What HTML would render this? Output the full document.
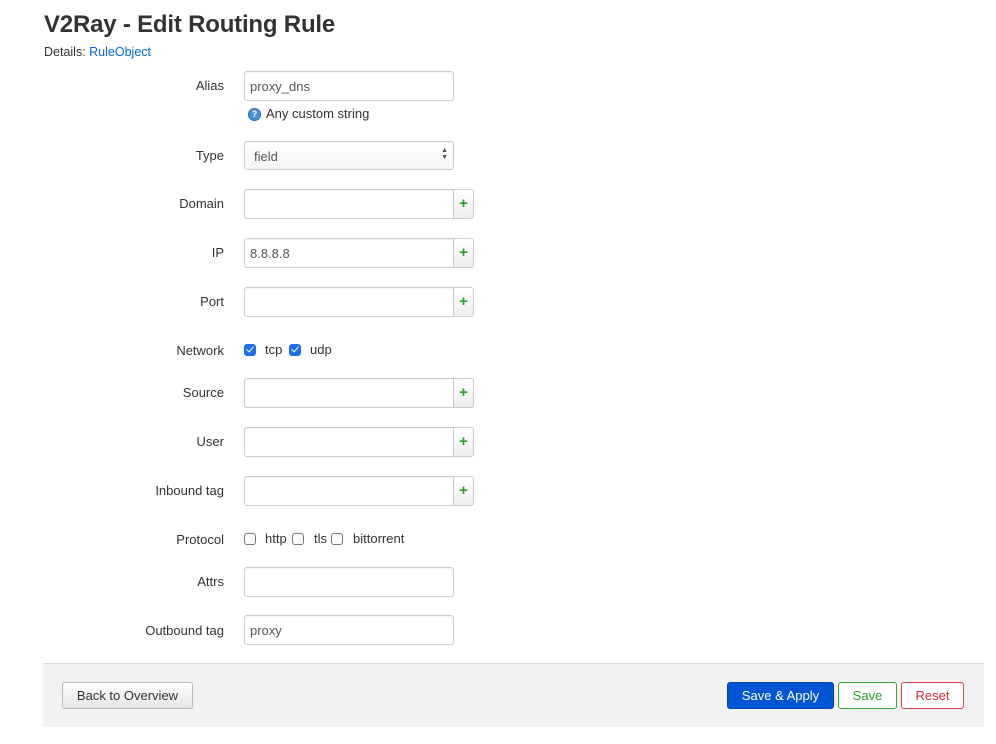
<!DOCTYPE html>
<html><head><meta charset="utf-8"><style>
*{box-sizing:border-box}
body{margin:0;width:996px;height:744px;background:#fff;font-family:"Liberation Sans",Arial,sans-serif;color:#333;position:relative;overflow:hidden}
.a{position:absolute}
h1{position:absolute;left:44px;top:11px;margin:0;font-size:24px;font-weight:bold;color:#333;letter-spacing:-0.2px}
.det{left:44px;top:45px;font-size:12.5px}
.det span{color:#0069d6}
.lbl{position:absolute;right:772px;font-size:13px;color:#333;white-space:nowrap}
.in{position:absolute;left:244px;width:210px;height:30px;border:1px solid #ccc;border-radius:3px;background:#fff;font-size:13px;color:#555;padding:7px 0 0 5px;box-shadow:inset 0 1px 1px rgba(0,0,0,.05)}
.in.g{width:210px;border-radius:3px 0 0 3px}
.plus{position:absolute;left:453px;width:21px;height:30px;border:1px solid #ccc;border-radius:0 3px 3px 0;background:linear-gradient(#fff,#eee);color:#2a9d2a;font-weight:bold;font-size:15px;text-align:center;line-height:28px}
.cb{position:absolute;width:12px;height:12px;border-radius:3px}
.on{background:#1f6fe5}
.on:after{content:"";position:absolute;left:3.5px;top:1px;width:3px;height:6px;border:solid #fff;border-width:0 1.6px 1.6px 0;transform:rotate(40deg)}
.off{border:1px solid #777;background:#fff}
.t{position:absolute;font-size:13px;color:#333}
.foot{left:43px;top:663px;width:941px;height:64px;background:#f2f2f2;border-top:1px solid #ddd}
.btn{position:absolute;top:682px;height:27px;border-radius:3px;font-size:13px;text-align:center;line-height:25px}
</style></head><body>
<h1>V2Ray - Edit Routing Rule</h1>
<div class="a det">Details: <span>RuleObject</span></div>

<div class="lbl" style="top:78px">Alias</div>
<div class="in" style="top:71px">proxy_dns</div>
<div class="a" style="left:248px;top:108px;width:13px;height:13px;border-radius:50%;background:#4a90d9;border:1px solid #2a6cb0;color:#fff;font-size:9px;font-weight:bold;text-align:center;line-height:11px">?</div>
<div class="t" style="left:266px;top:106px">Any custom string</div>

<div class="lbl" style="top:148px">Type</div>
<div class="in" style="top:141px;height:29px;padding-left:9px;background:linear-gradient(#fff,#f5f5f5)">field<span style="position:absolute;right:5px;top:5px;font-size:7px;line-height:7px;color:#555">▲<br>▼</span></div>

<div class="lbl" style="top:196px">Domain</div>
<div class="in g" style="top:189px"></div><div class="plus" style="top:189px">+</div>

<div class="lbl" style="top:245px">IP</div>
<div class="in g" style="top:238px">8.8.8.8</div><div class="plus" style="top:238px">+</div>

<div class="lbl" style="top:294px">Port</div>
<div class="in g" style="top:287px"></div><div class="plus" style="top:287px">+</div>

<div class="lbl" style="top:343px">Network</div>
<div class="cb on" style="left:244px;top:344px"></div><div class="t" style="left:265px;top:342px">tcp</div>
<div class="cb on" style="left:289px;top:344px"></div><div class="t" style="left:310px;top:342px">udp</div>

<div class="lbl" style="top:385px">Source</div>
<div class="in g" style="top:378px"></div><div class="plus" style="top:378px">+</div>

<div class="lbl" style="top:434px">User</div>
<div class="in g" style="top:427px"></div><div class="plus" style="top:427px">+</div>

<div class="lbl" style="top:483px">Inbound tag</div>
<div class="in g" style="top:476px"></div><div class="plus" style="top:476px">+</div>

<div class="lbl" style="top:532px">Protocol</div>
<div class="cb off" style="left:244px;top:533px"></div><div class="t" style="left:265px;top:531px">http</div>
<div class="cb off" style="left:292px;top:533px"></div><div class="t" style="left:314px;top:531px">tls</div>
<div class="cb off" style="left:331px;top:533px"></div><div class="t" style="left:353px;top:531px">bittorrent</div>

<div class="lbl" style="top:574px">Attrs</div>
<div class="in" style="top:567px"></div>

<div class="lbl" style="top:623px">Outbound tag</div>
<div class="in" style="top:615px">proxy</div>

<div class="a foot"></div>
<div class="btn" style="left:62px;width:131px;border:1px solid #bbb;background:linear-gradient(#fff,#e6e6e6);color:#333">Back to Overview</div>
<div class="btn" style="left:727px;width:107px;border:1px solid #0047b3;background:#0055d4;color:#fff">Save &amp; Apply</div>
<div class="btn" style="left:838px;width:59px;border:1px solid #3aa63a;background:#fff;color:#2a9d2a">Save</div>
<div class="btn" style="left:901px;width:63px;border:1px solid #d9434f;background:#fff;color:#d02d3a">Reset</div>
</body></html>
